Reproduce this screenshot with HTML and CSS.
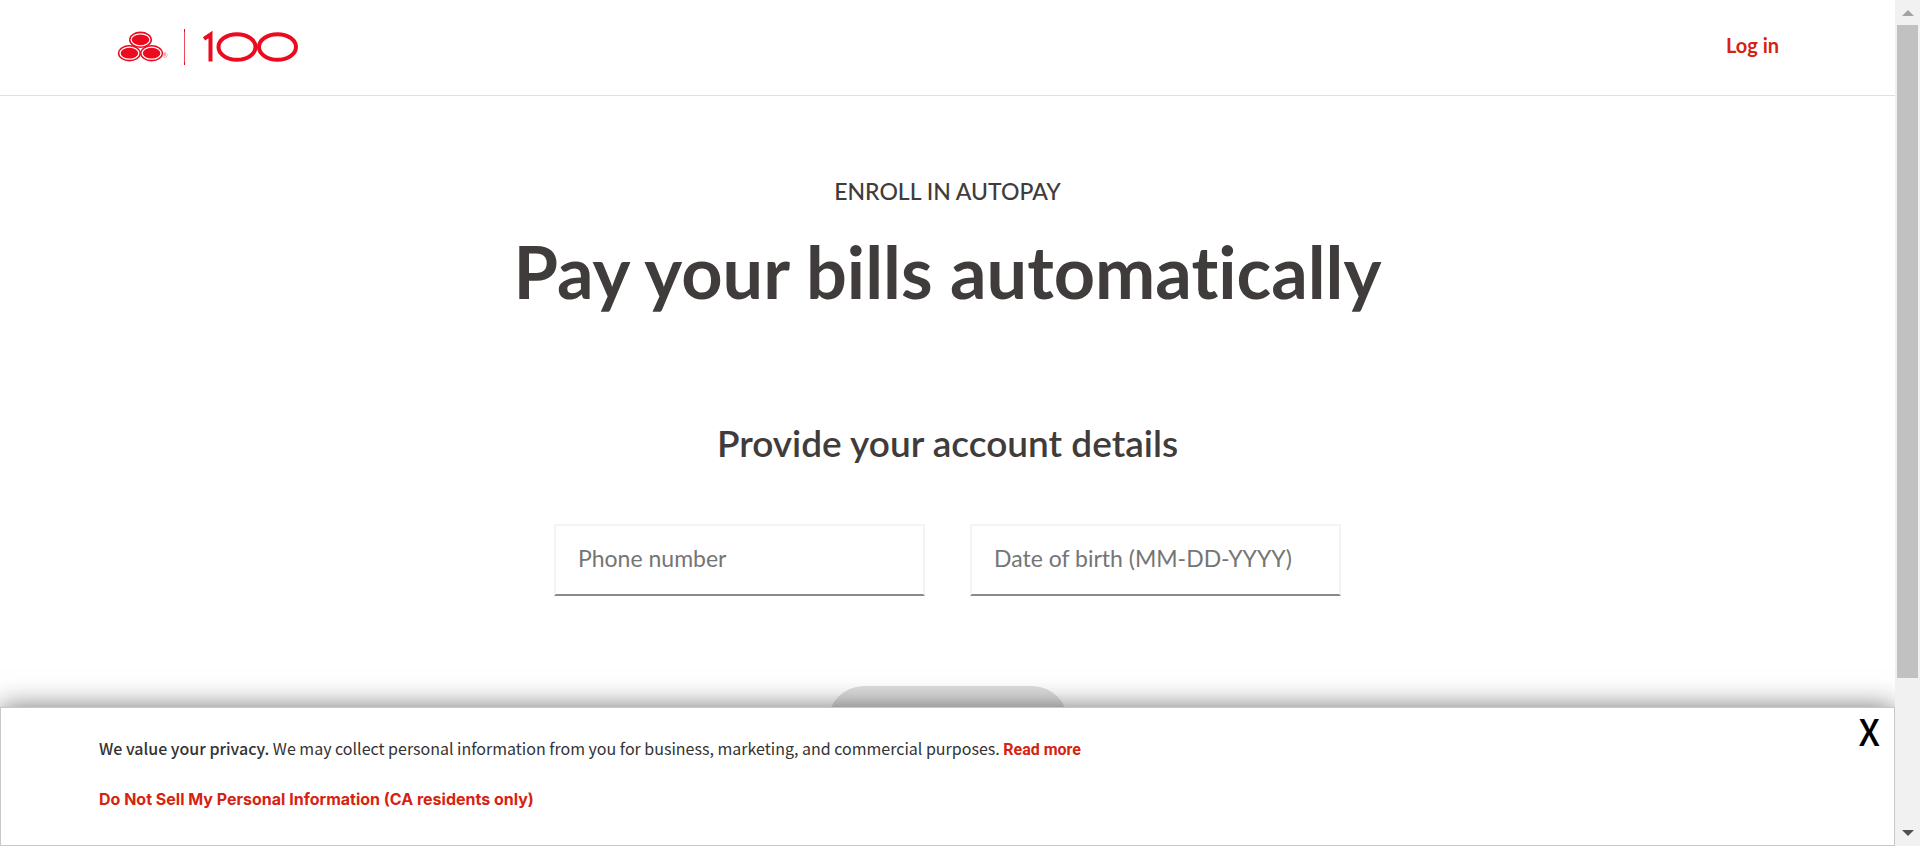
FILE: index.html
```
<!DOCTYPE html>
<html lang="en">
<head>
<meta charset="utf-8">
<title>Enroll in AutoPay</title>
<link rel="stylesheet" href="styles.css">
</head>
<body>
<div class="window">
  <div class="page">
    <header class="header">
      <a class="logo" href="#" aria-label="Home">
        <svg width="184" height="40" viewBox="116 27 184 40" fill="none">
          <g fill="#eb0a1e">
            <ellipse cx="140.500" cy="39.800" rx="11.500" ry="8.200"/>
            <ellipse cx="129.400" cy="53.200" rx="11.500" ry="8.200"/>
            <ellipse cx="151.600" cy="53.200" rx="11.500" ry="8.200"/>
          </g>
          <g stroke="#fff" stroke-width="1.300">
            <ellipse cx="140.500" cy="39.800" rx="9.400" ry="6"/>
            <ellipse cx="129.400" cy="53.200" rx="9.400" ry="6"/>
            <ellipse cx="151.600" cy="53.200" rx="9.400" ry="6"/>
          </g>
          <text class="logo-mark" x="162" y="58">®</text>
          <path d="M184.500 29v36" stroke="#f0475a"/>
          <path d="M184.500 29v3M184.500 62v3" stroke="#eb0a1e"/>
          <path d="M204 38.800L210.500 34.500V61.500" stroke="#eb0a1e" stroke-width="4"/>
          <g stroke="#eb0a1e" stroke-width="4">
            <ellipse cx="237" cy="47" rx="18.500" ry="12.800"/>
            <ellipse cx="277.500" cy="47" rx="18.500" ry="12.800"/>
          </g>
        </svg>
      </a>
      <a class="login" href="#">Log in</a>
    </header>
    <main class="main">
      <p class="eyebrow">ENROLL IN AUTOPAY</p>
      <h1 class="title">Pay your bills automatically</h1>
      <h2 class="subtitle">Provide your account details</h2>
      <form class="form">
        <div class="fields">
          <input class="field" type="text" placeholder="Phone number" aria-label="Phone number">
          <input class="field" type="text" placeholder="Date of birth (MM-DD-YYYY)" aria-label="Date of birth (MM-DD-YYYY)">
        </div>
        <button class="submit" type="button" disabled aria-label="Continue"></button>
      </form>
    </main>
    <section class="privacy" aria-label="Privacy notice">
      <div class="privacy-text">
        <p class="privacy-line"><strong class="privacy-lead">We value your privacy.</strong> We may collect personal information from you for business, marketing, and commercial purposes. <a class="read-more" href="#">Read more</a></p>
        <p class="privacy-line"><a class="opt-out" href="#">Do Not Sell My Personal Information (CA residents only)</a></p>
      </div>
      <button class="close" type="button">X</button>
    </section>
  </div>
  <div class="scrollbar" aria-hidden="true">
    <div class="arrow arrow-up"></div>
    <div class="track"><div class="thumb"></div></div>
    <div class="arrow arrow-down"></div>
  </div>
</div>
</body>
</html>
```
FILE: styles.css
```
* { box-sizing: border-box; }

body {
  margin: 0;
  color: #403c3b;
  background: #fff;
  font-family: Lato, sans-serif;
  font-variant-ligatures: none;
}

h1, h2, p { margin: 0; }

a { color: #d62311; text-decoration: none; }

.window {
  display: flex;
  height: 100vh;
  overflow: hidden;
}

.page {
  position: relative;
  flex: 1;
  min-width: 0;
  overflow: hidden;
}

.header {
  display: flex;
  align-items: center;
  justify-content: space-between;
  height: 96px;
  padding: 0 116px 2px;
  border-bottom: 1px solid #e0e0e0;
}

.logo { display: flex; }
.logo svg { display: block; }
.logo-mark { fill: #f0626f; font: 7px Lato, sans-serif; }

.login { padding-bottom: 4px; font-size: 20px; font-weight: 700; line-height: 24px; }

.main {
  display: flex;
  flex-direction: column;
  align-items: center;
  padding-top: 79px;
  text-align: center;
}

.eyebrow { font-size: 23px; font-weight: 500; line-height: 32px; }

.title {
  margin-top: 20px;
  font-size: 72px;
  font-weight: 700;
  line-height: 88px;
}

.subtitle {
  margin-top: 104px;
  font-size: 37px;
  font-weight: 600;
  line-height: 48px;
}

.form {
  display: flex;
  flex-direction: column;
  align-items: center;
  gap: 90px;
  margin-top: 57px;
}

.fields { display: flex; gap: 45px; }

.field {
  width: 371px;
  height: 72px;
  padding: 0 22px 4px;
  border: 2px solid #f4f4f4;
  border-bottom: 2px solid #8a8888;
  border-radius: 0;
  color: #403c3b;
  background: #fff;
  font: 23px Lato, sans-serif;
}

.field::placeholder { color: #757575; opacity: 1; }

.submit {
  width: 240px;
  height: 72px;
  border: 0;
  border-radius: 36px;
  background: #dedede;
}

.privacy {
  position: absolute;
  right: 0;
  bottom: 0;
  left: 0;
  display: flex;
  align-items: flex-start;
  justify-content: space-between;
  padding: 24px 14px 30px 98px;
  border: 1px solid #c8c8c8;
  background: #fff;
  box-shadow: 0 0 26px rgba(0, 0, 0, 0.55);
}

.privacy-text { display: grid; gap: 16px; }

.privacy-line {
  color: #333;
  font: 16px/32px "Noto Sans CJK SC", sans-serif;
}

.privacy-lead { font-weight: 500; }
.read-more { font: 700 16px/32px Roboto, sans-serif; }
.opt-out { font: 700 16px/32px Inter, sans-serif; }

.close {
  margin-top: -20px;
  padding: 0;
  border: 0;
  color: #000;
  background: none;
  font: 500 36px/36px "Noto Sans CJK SC", sans-serif;
}

.scrollbar {
  display: flex;
  flex-direction: column;
  width: 25px;
  padding: 10px 2px;
  background: #f1f1f1;
}

.arrow {
  align-self: center;
  border: 6px solid transparent;
}

.arrow-up { border-top: 0; border-bottom-color: #a3a3a3; }
.arrow-down { border-bottom: 0; border-top-color: #505050; }

.track { flex: 1; padding: 9px 0; }
.thumb { height: 82%; background: #c1c1c1; }
```
